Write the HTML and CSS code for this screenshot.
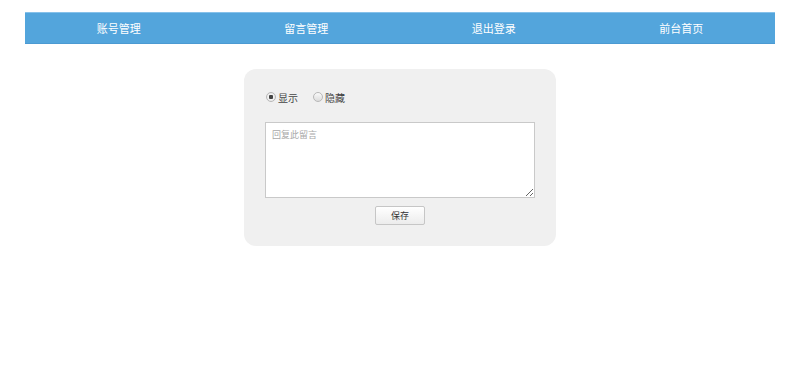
FILE: index.html
```html
<!DOCTYPE html>
<html lang="zh-CN">
<head>
  <meta charset="UTF-8" />
  <title>留言管理</title>
  <link rel="stylesheet" href="styles.css">
</head>
<body>

  <nav>
    <a href="#">账号管理</a>
    <a href="#">留言管理</a>
    <a href="#">退出登录</a>
    <a href="#">前台首页</a>
  </nav>

  <form class="reply-box">
    <div class="status-row">
      <label><input type="radio" name="status" checked> 显示</label>
      <label><input type="radio" name="status"> 隐藏</label>
    </div>
    <textarea placeholder="回复此留言"></textarea>
    <button type="button">保存</button>
  </form>

</body>
</html>
```

FILE: styles.css
```css
body {
  margin: 0;
  font-family: "Noto Sans CJK SC", "Noto Sans", sans-serif;
  background-color: #fff;
  color: #333;
}

nav {
  display: flex;
  margin: 12px 25px 0;
  height: 30px;
  background-color: #53a5dc;
  border-top: 1px solid #86c1ea;
  border-bottom: 1px solid #4b9ad2;
}

nav a {
  flex: 1;
  text-align: center;
  line-height: 30px;
  font-size: 11px;
  color: #fff;
  text-decoration: none;
}

.reply-box {
  width: 270px;
  margin: 25px auto 0;
  padding: 20px 21px 21px;
  background-color: #f0f0f0;
  border-radius: 12px;
}

.status-row {
  display: flex;
  align-items: center;
  gap: 14px;
  height: 16px;
  font-size: 10px;
  color: #444;
}

.status-row label {
  display: flex;
  align-items: center;
  gap: 2px;
}

.status-row input {
  appearance: none;
  -webkit-appearance: none;
  width: 10px;
  height: 10px;
  margin: 0 0 0 1px;
  border: 1px solid #b8b8b8;
  border-radius: 50%;
  background: linear-gradient(#fafafa, #dcdcdc);
  box-sizing: border-box;
}

.status-row input:checked {
  background: radial-gradient(circle, #444 0 2px, #f4f4f4 2.5px, #dedede 100%);
}

textarea {
  display: block;
  width: 270px;
  height: 76px;
  margin-top: 17px;
  padding: 5px 6px;
  box-sizing: border-box;
  border: 1px solid #c9c9c9;
  background: #fff;
  font-family: "Noto Sans CJK SC", serif;
  font-size: 9px;
}

textarea::placeholder {
  color: #a8a8a8;
}

button {
  display: block;
  width: 50px;
  height: 19px;
  margin: 8px auto 0;
  padding: 0;
  border: 1px solid #c6c6c6;
  border-radius: 2px;
  background: linear-gradient(#fff, #ececec);
  font-family: "Noto Sans CJK SC", sans-serif;
  font-size: 9px;
  color: #333;
}
```
